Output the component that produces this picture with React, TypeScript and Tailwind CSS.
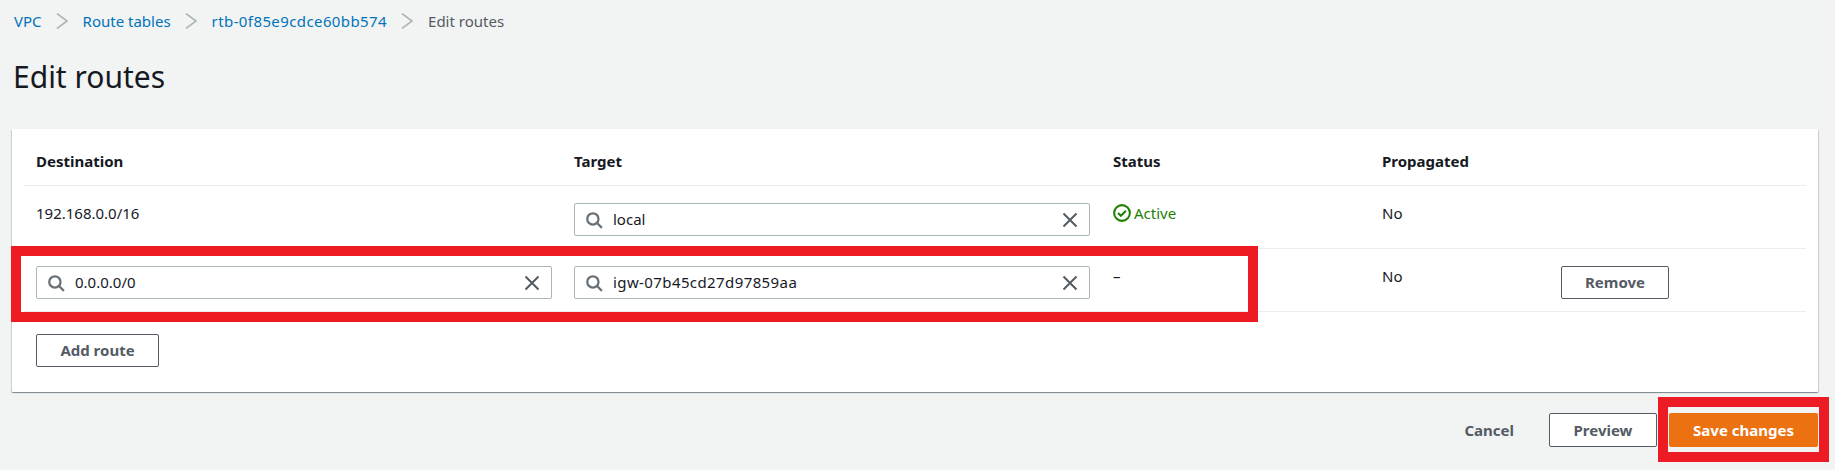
const font = "font-['Noto_Sans',sans-serif]";

function Chevron() {
  return (
    <svg width="16" height="16" viewBox="0 0 16 16" fill="none" stroke="#aab7b8" strokeWidth="1.6" className="ml-[12px] mr-[13px] shrink-0">
      <path d="M3 .5L13 8 3 15.5" />
    </svg>
  );
}

function SearchInput({ value, mono }: { value: string; mono?: boolean }) {
  return (
    <div className="flex h-[33px] w-full items-center rounded-[2px] border border-[#aab7b8] bg-white pl-[10px] pr-[11px]">
      <svg width="18" height="18" viewBox="0 0 16 16" fill="none" stroke="#687078" strokeWidth="2" className="shrink-0">
        <circle cx="7" cy="7" r="5" />
        <path d="M10.5 10.5l4.5 4.5" />
      </svg>
      <span className={`ml-[10px] flex-1 text-[15px] text-[#16191f] ${mono ? "tracking-[0.4px]" : ""}`}>{value}</span>
      <svg width="16" height="16" viewBox="0 0 16 16" fill="none" stroke="#545b64" strokeWidth="2" className="shrink-0">
        <path d="M1.5 1.5l13 13M14.5 1.5l-13 13" />
      </svg>
    </div>
  );
}

function OutlineButton({ label, className }: { label: string; className: string }) {
  return (
    <button className={`flex h-[33px] items-center justify-center rounded-[2px] border border-[#545b64] bg-white text-[15px] font-bold text-[#545b64] ${className}`}>
      {label}
    </button>
  );
}

const columns = "mx-3 grid grid-cols-[550px_539px_269px_179px_1fr] border-b border-[#eaeded]";

export default function App() {
  return (
    <div className={`h-[470px] w-[1835px] bg-[#f2f3f3] ${font} relative overflow-hidden`}>
      <div className="flex h-[42px] items-center pl-[14px] text-[15px]">
        <a className="text-[#0073bb]">VPC</a>
        <Chevron />
        <a className="text-[#0073bb]">Route tables</a>
        <Chevron />
        <a className="tracking-[0.4px] text-[#0073bb]">rtb-0f85e9cdce60bb574</a>
        <Chevron />
        <span className="text-[#545b64]">Edit routes</span>
      </div>

      <h1 className="mt-[15px] pl-[13px] text-[30px] leading-[40px] text-[#16191f]">Edit routes</h1>

      <div className="mx-3 mt-[32px] h-[263px] w-[1806px] rounded-[1px] bg-white shadow-[0_1px_1px_0_rgba(0,28,36,0.3),1px_1px_1px_0_rgba(0,28,36,0.15),-1px_1px_1px_0_rgba(0,28,36,0.15)]">
        <div className={`${columns} h-[57px] items-center pt-2 text-[15px] font-bold text-[#16191f]`}>
          <div className="pl-3">Destination</div>
          <div>Target</div>
          <div>Status</div>
          <div>Propagated</div>
          <div />
        </div>

        <div className={`${columns} h-[63px] text-[15px] text-[#16191f]`}>
          <div className="pl-3 pt-4">192.168.0.0/16</div>
          <div className="pr-[23px] pt-[17px]"><SearchInput value="local" /></div>
          <div className="flex items-start gap-[3px] pt-4 text-[#1d8102]">
            <svg width="18" height="18" viewBox="0 0 16 16" fill="none" stroke="#1d8102" strokeWidth="1.8" className="mt-[2px] shrink-0">
              <circle cx="8" cy="8" r="7" />
              <path d="M4.5 8l2.5 2.5 4.5-4.5" />
            </svg>
            Active
          </div>
          <div className="pt-4">No</div>
          <div />
        </div>

        <div className={`${columns} h-[63px] text-[15px] text-[#16191f]`}>
          <div className="pl-3 pr-[22px] pt-[17px]"><SearchInput value="0.0.0.0/0" /></div>
          <div className="pr-[23px] pt-[17px]"><SearchInput value="igw-07b45cd27d97859aa" mono /></div>
          <div className="pt-4">–</div>
          <div className="pt-4">No</div>
          <div className="pt-[17px]"><OutlineButton label="Remove" className="w-[108px]" /></div>
        </div>

        <div className="pl-6 pt-[22px]">
          <OutlineButton label="Add route" className="w-[123px]" />
        </div>
      </div>

      <div className="mt-[21px] flex items-center justify-end pr-[17px]">
        <span className="mr-[35px] text-[15px] font-bold text-[#545b64]">Cancel</span>
        <OutlineButton label="Preview" className="h-[34px] w-[108px]" />
        <button className="ml-3 flex h-[34px] w-[149px] items-center justify-center rounded-[2px] bg-[#ec7211] text-[15px] font-bold text-white">
          Save changes
        </button>
      </div>

      {/* red annotation boxes drawn over the screenshot */}
      <div className="pointer-events-none absolute left-[11px] top-[246px] h-[76px] w-[1247px] border-[10px] border-[#ed1c24]" />
      <div className="pointer-events-none absolute left-[1658px] top-[397px] h-[65px] w-[171px] border-[10px] border-[#ed1c24]" />
    </div>
  );
}
